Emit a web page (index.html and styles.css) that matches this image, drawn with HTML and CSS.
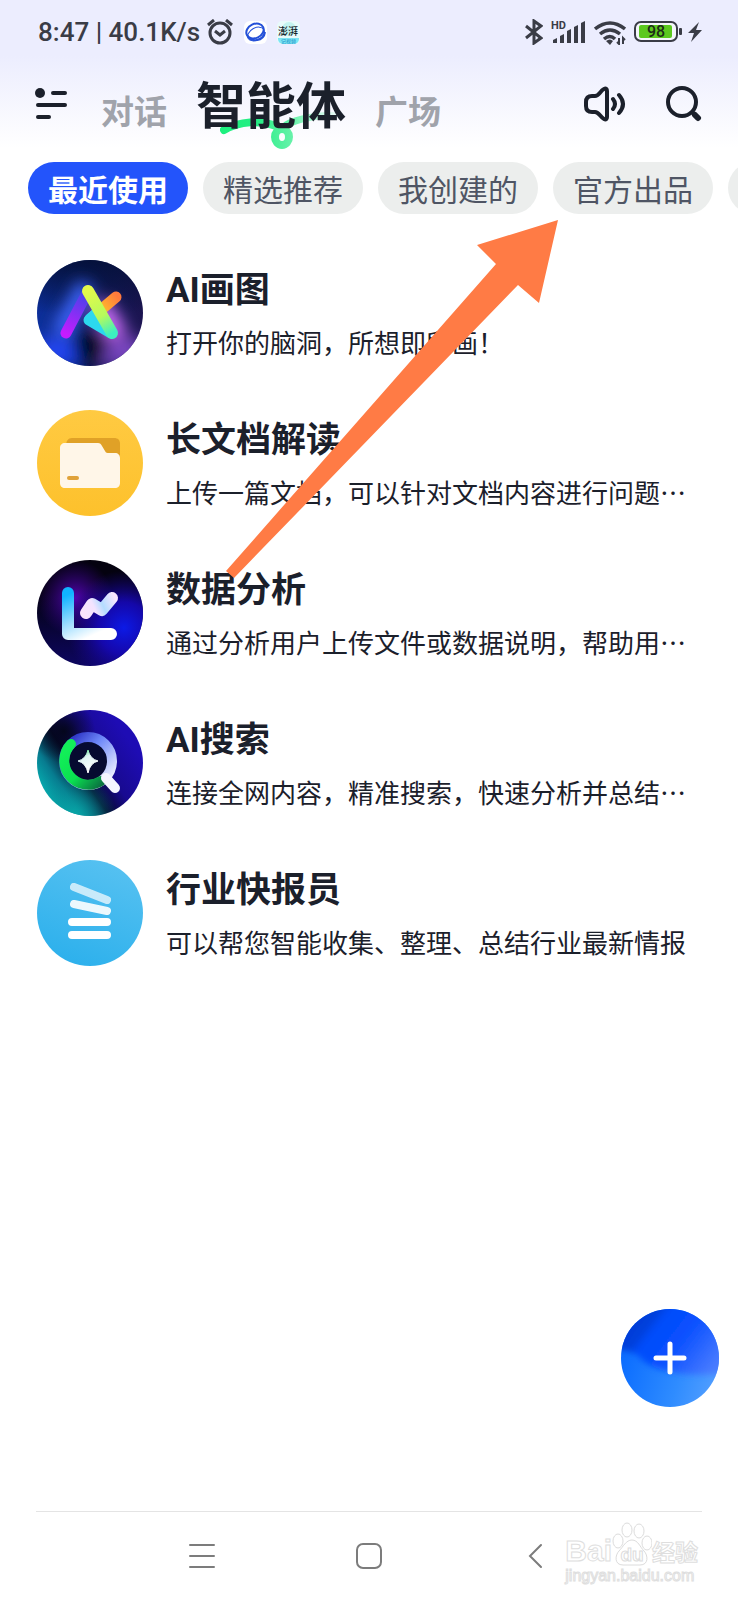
FILE: index.html
```html
<!DOCTYPE html>
<html lang="zh-CN">
<head>
  <meta charset="UTF-8" />
  <meta name="viewport" content="width=device-width, initial-scale=1.0"/>
  <title>智能体</title>
  <link rel="stylesheet" href="styles.css">
</head>
<body>
  <div class="app">
    <div class="statusbar">
      <span class="clock">8:47 | 40.1K/s</span>
      <svg class="alarm" width="28" height="26" viewBox="0 0 28 26" fill="none" stroke="#3a3c46" stroke-width="3">
        <circle cx="14" cy="14" r="10"/>
        <path d="M2 6l6-5M26 6l-6-5M9 12l5 4 5-4"/>
      </svg>
      <svg class="notice" width="23" height="23" viewBox="0 0 23 23">
        <rect width="23" height="23" rx="6" fill="#fff"/>
        <g fill="none" stroke="#2450d8" stroke-width="2">
          <ellipse cx="11" cy="10" rx="9" ry="7" transform="rotate(-25 11 10)"/>
          <ellipse cx="12" cy="13" rx="9" ry="6" transform="rotate(-30 12 13)" stroke-width="1"/>
          <path d="M3 14q3 6 10 5t8-8"/>
        </g>
      </svg>
      <svg class="notice" width="23" height="23" viewBox="0 0 23 23">
        <rect width="23" height="23" rx="5" fill="#e9fbfb"/>
        <path d="M1 17h21v1a5 5 0 0 1-5 5H6a5 5 0 0 1-5-5z" fill="#7de6f5"/>
        <circle cx="12" cy="8" r="7" fill="#c4f4f0"/>
        <text x="1" y="14" font-size="10" font-weight="500" fill="#17262c">澎湃</text>
        <text x="4" y="22" font-size="5" fill="#168fc4">记视频</text>
      </svg>
      <div class="signals">
        <svg width="18" height="26" viewBox="0 0 18 26" fill="none" stroke="#3a3c46" stroke-width="3">
          <path d="M1 7l15 12-7 5V2l7 5L1 19"/>
        </svg>
        <svg class="cell" width="35" height="24" viewBox="0 0 35 24" fill="#3a3c46">
          <text x="0" y="9" font-size="11" font-weight="700">HD</text>
          <path d="M2 20l4-2v5H2zM9 16l4-2v9H9zM16 11l4-2v14h-4zM23 7l4-2v18h-4zM30 3l4-2v22h-4z"/>
        </svg>
        <svg class="wifi" width="32" height="25" viewBox="0 0 32 25" fill="none" stroke="#3a3c46" stroke-width="4">
          <path d="M1 9q15-12 30 0M6 14q10-8 20 0M10 19q6-5 11 0" stroke-width="3.500"/>
          <path d="M12 21q4-3 7 0l-3 4z" fill="#3a3c46" stroke="none"/>
          <path d="M25 18v6l-2-2M29 24v-6l2 2" stroke-width="2"/>
        </svg>
        <svg class="battery" width="48" height="22" viewBox="0 0 48 22">
          <rect x="1" y="1" width="42" height="19" rx="6" fill="#f4f6fb" stroke="#3a3c46" stroke-width="2"/>
          <rect x="5" y="4" width="33" height="13" rx="2" fill="#5cc81e"/>
          <rect x="45" y="7" width="3" height="7" rx="1" fill="#3a3c46"/>
          <text x="22" y="16" font-size="16" font-weight="500" text-anchor="middle" fill="#1c2b17">98</text>
        </svg>
        <svg width="14" height="20" viewBox="0 0 14 20" fill="#3a3c46">
          <path d="M11 0L0 11h6l-3 9L14 8H8z"/>
        </svg>
      </div>
    </div>

    <header class="topbar">
      <button class="icon-btn" aria-label="菜单">
        <svg width="34" height="34" viewBox="0 0 34 34" fill="none" stroke="#1b202b" stroke-width="4" stroke-linecap="round">
          <circle cx="5" cy="6" r="5" fill="#1b202b" stroke="none"/>
          <path d="M18 6h12M3 18h27M3 30h11"/>
        </svg>
      </button>
      <nav class="tabs">
        <button class="tab">对话</button>
        <button class="tab active">
          <svg class="swoosh" width="130" height="38" viewBox="0 0 130 38" fill="none" stroke-linecap="round">
            <defs>
              <linearGradient id="swooshFade" gradientUnits="userSpaceOnUse" x1="0" y1="0" x2="124" y2="0">
                <stop offset="0" stop-color="#1cf07e"/>
                <stop offset=".3" stop-color="#25ee85"/>
                <stop offset=".6" stop-color="#6cf2ac"/>
                <stop offset="1" stop-color="#9af7c8" stop-opacity="0"/>
              </linearGradient>
            </defs>
            <path d="M4 18C20 9 40 8 56 14" stroke="url(#swooshFade)" stroke-width="8"/>
            <ellipse cx="62" cy="25" rx="7" ry="8" stroke="url(#swooshFade)" stroke-width="8"/>
            <path d="M66 13C80 5 100 4 122 2" stroke="url(#swooshFade)" stroke-width="7"/>
          </svg>
          <span>智能体</span>
        </button>
        <button class="tab">广场</button>
      </nav>
      <div class="actions">
        <button class="icon-btn" aria-label="声音">
          <svg width="42" height="36" viewBox="0 0 42 36" fill="none" stroke="#1b202b" stroke-width="4" stroke-linecap="round" stroke-linejoin="round">
            <path d="M8 10h3c4 0 5-5 9-7 2-1 3 0 3 2v26c0 2-1 3-3 2-4-2-5-7-9-7H8c-4 0-6-2-6-6v-4c0-4 2-6 6-6z"/>
            <path d="M29 13q4 5 0 10M35 9q8 9 0 18"/>
          </svg>
        </button>
        <button class="icon-btn" aria-label="搜索">
          <svg width="36" height="36" viewBox="0 0 36 36" fill="none" stroke="#1b202b" stroke-linecap="round">
            <circle cx="16" cy="16" r="14" stroke-width="4"/>
            <path d="M29 29l3 3" stroke-width="6"/>
            <path d="M27 27l2 2" stroke-width="4"/>
          </svg>
        </button>
      </div>
    </header>

    <div class="chips">
      <button class="chip selected">最近使用</button>
      <button class="chip">精选推荐</button>
      <button class="chip">我创建的</button>
      <button class="chip">官方出品</button>
      <button class="chip" aria-label="更多"></button>
    </div>

    <main class="agents">
      <a class="agent" href="#">
        <svg class="avatar" viewBox="0 0 106 106">
          <defs>
            <linearGradient id="drawBase" x1="0" y1="0" x2="1" y2="0"><stop offset="0" stop-color="#0c2f9c"/><stop offset=".45" stop-color="#0a1c5c"/><stop offset="1" stop-color="#1c1450"/></linearGradient>
            <linearGradient id="drawTop" x1="0" y1="0" x2="0" y2="1"><stop offset="0" stop-color="#041038" stop-opacity=".9"/><stop offset=".5" stop-color="#041038" stop-opacity="0"/></linearGradient>
            <filter id="drawGlow" x="-50%" y="-50%" width="200%" height="200%"><feGaussianBlur stdDeviation="8"/></filter>
            <clipPath id="drawClip"><circle cx="53" cy="53" r="53"/></clipPath>
            <linearGradient id="barPurple" gradientUnits="userSpaceOnUse" x1="51" y1="31" x2="29" y2="74"><stop offset="0" stop-color="#3c46e8"/><stop offset="1" stop-color="#c41cff"/></linearGradient>
            <linearGradient id="barYellow" gradientUnits="userSpaceOnUse" x1="51" y1="31" x2="75" y2="73"><stop offset="0" stop-color="#e3f94b"/><stop offset=".6" stop-color="#b6fa5c"/><stop offset="1" stop-color="#3df0c0"/></linearGradient>
            <linearGradient id="barOrange" gradientUnits="userSpaceOnUse" x1="80" y1="36" x2="51" y2="60"><stop offset="0" stop-color="#ff7a3c"/><stop offset=".45" stop-color="#ffb02e"/><stop offset=".6" stop-color="#42dfe0"/><stop offset="1" stop-color="#2cd8ee"/></linearGradient>
          </defs>
          <g clip-path="url(#drawClip)">
            <rect width="106" height="106" fill="url(#drawBase)"/>
            <rect width="106" height="106" fill="url(#drawTop)"/>
            <g filter="url(#drawGlow)">
              <path d="M0 78h34l8 28H0z" fill="#2344f0"/>
              <path d="M106 78H76l-14 28h44z" fill="#7844c0"/>
              <path d="M50 24L22 74" stroke="#3c66ff" stroke-width="18"/>
              <path d="M62 44L82 76" stroke="#d470ff" stroke-width="20"/>
              <path d="M34 74h38l-8 32H42z" fill="#020a20"/>
            </g>
          </g>
          <g fill="none" stroke-width="11" stroke-linecap="round" stroke-linejoin="round">
            <path d="M51 31L29 73" stroke="url(#barPurple)"/>
            <path d="M79 37L53 59" stroke="url(#barOrange)"/>
            <path d="M52 60l22 13-12-22z" stroke="#2cd8ee" fill="#2cd8ee"/>
            <path d="M51 31l24 42" stroke="url(#barYellow)" stroke-width="12"/>
          </g>
        </svg>
        <div class="info">
          <h2>AI画图</h2>
          <p>打开你的脑洞，所想即所画！</p>
        </div>
      </a>
      <a class="agent" href="#">
        <svg class="avatar" viewBox="0 0 106 106">
          <defs>
            <linearGradient id="docBg" x1="0" y1="0" x2="0" y2="1"><stop offset="0" stop-color="#ffca42"/><stop offset="1" stop-color="#fdc12c"/></linearGradient>
          </defs>
          <circle cx="53" cy="53" r="53" fill="url(#docBg)"/>
          <path d="M29 36c0-5 2-8 6-8h42c4 0 6 2 6 6v16H29z" fill="#e0a127"/>
          <path d="M28 33h33c2 0 3 1 4 3l3 5c1 2 2 2 4 2h6c3 0 5 2 5 5v25c0 3-2 5-5 5H28c-3 0-5-2-5-5V38c0-3 2-5 5-5z" fill="#fff6e8"/>
          <path d="M32 68h8" stroke="#e0a23a" stroke-width="4" stroke-linecap="round"/>
        </svg>
        <div class="info">
          <h2>长文档解读</h2>
          <p>上传一篇文档，可以针对文档内容进行问题…</p>
        </div>
      </a>
      <a class="agent" href="#">
        <svg class="avatar" viewBox="0 0 106 106">
          <defs>
            <radialGradient id="dataPurple" cx=".36" cy=".36" r=".36"><stop offset="0" stop-color="#5204ae"/><stop offset="1" stop-color="#3a0494" stop-opacity="0"/></radialGradient>
            <radialGradient id="dataBlue" cx=".82" cy=".64" r=".54"><stop offset="0" stop-color="#0c1ae6"/><stop offset=".45" stop-color="#1608b8" stop-opacity=".9"/><stop offset="1" stop-color="#1a0490" stop-opacity="0"/></radialGradient>
            <linearGradient id="dataBase" x1="0" y1="0" x2="0" y2="1"><stop offset=".3" stop-color="#04020f"/><stop offset="1" stop-color="#0d0660"/></linearGradient>
            <linearGradient id="axis" gradientUnits="userSpaceOnUse" x1="30" y1="35" x2="50" y2="78"><stop offset="0" stop-color="#10b4ff"/><stop offset=".55" stop-color="#9adcff"/><stop offset="1" stop-color="#fff"/></linearGradient>
            <linearGradient id="trend" gradientUnits="userSpaceOnUse" x1="46" y1="53" x2="78" y2="38"><stop offset="0" stop-color="#fbe3fb"/><stop offset=".35" stop-color="#f3e4ff"/><stop offset=".6" stop-color="#b4dcff"/><stop offset="1" stop-color="#f7e6ff"/></linearGradient>
          </defs>
          <circle cx="53" cy="53" r="53" fill="url(#dataBase)"/>
          <circle cx="53" cy="53" r="53" fill="url(#dataPurple)"/>
          <circle cx="53" cy="53" r="53" fill="url(#dataBlue)"/>
          <g fill="none" stroke-linecap="round" stroke-linejoin="round">
            <path d="M31 33v41h43" stroke="url(#axis)" stroke-width="12"/>
            <path d="M49 53l6-9 10 6 10-12" stroke="url(#trend)" stroke-width="12"/>
          </g>
        </svg>
        <div class="info">
          <h2>数据分析</h2>
          <p>通过分析用户上传文件或数据说明，帮助用…</p>
        </div>
      </a>
      <a class="agent" href="#">
        <svg class="avatar" viewBox="0 0 106 106">
          <defs>
            <linearGradient id="searchBase" x1=".05" y1=".8" x2=".85" y2=".25"><stop offset="0" stop-color="#06b4b4"/><stop offset=".2" stop-color="#077c90"/><stop offset=".42" stop-color="#050828"/><stop offset=".65" stop-color="#180a90"/><stop offset="1" stop-color="#1e0cb4"/></linearGradient>
            <radialGradient id="searchDark" cx=".25" cy=".2" r=".3"><stop offset="0" stop-color="#04061c"/><stop offset="1" stop-color="#04061c" stop-opacity="0"/></radialGradient>
            <radialGradient id="searchTeal" cx=".35" cy="1" r=".4"><stop offset="0" stop-color="#08a8a8"/><stop offset="1" stop-color="#078c94" stop-opacity="0"/></radialGradient>
            <linearGradient id="ring" x1="0" y1="0" x2="1" y2="1"><stop offset=".1" stop-color="#3038c8"/><stop offset=".4" stop-color="#6c86f8"/><stop offset=".9" stop-color="#e8ecff"/></linearGradient>
            <linearGradient id="ringGreen" gradientUnits="userSpaceOnUse" x1="30" y1="40" x2="66" y2="76"><stop offset="0" stop-color="#12ee58"/><stop offset=".5" stop-color="#0ae050"/><stop offset="1" stop-color="#0a6a40"/></linearGradient>
            <linearGradient id="spark" x1="0" y1="0" x2=".4" y2="1"><stop offset="0" stop-color="#3ae878"/><stop offset=".4" stop-color="#dff4f4"/><stop offset="1" stop-color="#fff"/></linearGradient>
          </defs>
          <circle cx="53" cy="53" r="53" fill="url(#searchBase)"/>
          <circle cx="53" cy="53" r="53" fill="url(#searchDark)"/>
          <circle cx="53" cy="53" r="53" fill="url(#searchTeal)"/>
          <circle cx="51" cy="51" r="20" fill="#060a30"/>
          <circle cx="51" cy="51" r="24" fill="none" stroke="url(#ring)" stroke-width="10"/>
          <path d="M34 34a24 24 0 0 0 30 37" fill="none" stroke="url(#ringGreen)" stroke-width="10" stroke-linecap="round"/>
          <path d="M69 68l9 10" stroke="#f4f5ff" stroke-width="10" stroke-linecap="round"/>
          <path d="M51 40q2 9 10 11-8 2-10 12-2-10-10-12 8-2 10-11z" fill="url(#spark)" stroke="url(#spark)" stroke-linejoin="round"/>
        </svg>
        <div class="info">
          <h2>AI搜索</h2>
          <p>连接全网内容，精准搜索，快速分析并总结…</p>
        </div>
      </a>
      <a class="agent" href="#">
        <svg class="avatar" viewBox="0 0 106 106">
          <defs>
            <linearGradient id="newsBg" x1=".7" y1="0" x2=".3" y2="1"><stop offset="0" stop-color="#56c1f1"/><stop offset="1" stop-color="#2cb0ec"/></linearGradient>
          </defs>
          <circle cx="53" cy="53" r="53" fill="url(#newsBg)"/>
          <g stroke="#fff" stroke-width="8" stroke-linecap="round">
            <path d="M37 27l33 13" opacity=".7"/>
            <path d="M37 44l33 7" opacity=".9"/>
            <path d="M35 62h35M35 75h35"/>
          </g>
        </svg>
        <div class="info">
          <h2>行业快报员</h2>
          <p>可以帮您智能收集、整理、总结行业最新情报</p>
        </div>
      </a>
    </main>

    <footer class="navbar">
      <button class="nav-btn" aria-label="最近任务">
        <svg width="28" height="28" viewBox="0 0 28 28" fill="none" stroke="#7c7c7c" stroke-width="2" stroke-linecap="round"><path d="M2 3h24M2 14h24M2 25h24"/></svg>
      </button>
      <button class="nav-btn" aria-label="主页">
        <svg width="28" height="28" viewBox="0 0 28 28" fill="none" stroke="#7c7c7c" stroke-width="2"><rect x="2" y="2" width="24" height="24" rx="6"/></svg>
      </button>
      <button class="nav-btn" aria-label="返回">
        <svg width="28" height="28" viewBox="0 0 28 28" fill="none" stroke="#7c7c7c" stroke-width="2" stroke-linecap="round"><path d="M19 3L8 14l11 11"/></svg>
      </button>
    </footer>

    <button class="fab" aria-label="新建">
      <svg width="98" height="98" viewBox="0 0 98 98">
        <defs>
          <linearGradient id="fabBase" x1="0" y1=".5" x2="1" y2=".8"><stop offset="0" stop-color="#0a6cff"/><stop offset=".6" stop-color="#2f8cff"/><stop offset="1" stop-color="#55a0ff"/></linearGradient>
          <linearGradient id="fabTop" x1="0" y1=".2" x2="1" y2=".7"><stop offset="0" stop-color="#0638d0"/><stop offset=".3" stop-color="#0040dc"/><stop offset=".36" stop-color="#004cfa"/><stop offset=".6" stop-color="#0a50ff"/><stop offset="1" stop-color="#4a7cff"/></linearGradient>
          <clipPath id="fabClip"><circle cx="49" cy="49" r="49"/></clipPath>
          <filter id="fabSoft"><feGaussianBlur stdDeviation="3"/></filter>
        </defs>
        <g clip-path="url(#fabClip)">
          <rect width="98" height="98" fill="url(#fabBase)"/>
          <path d="M-8-8h114v72q-36 4-60-2T18 47Q6 40-8 40z" fill="url(#fabTop)" filter="url(#fabSoft)"/>
        </g>
        <path d="M35 49h28M49 35v28" stroke="#fff" stroke-width="5" stroke-linecap="round"/>
      </svg>
    </button>

    <svg class="pointer" width="332" height="360" viewBox="0 0 332 360">
      <path d="M332 0l-19 83-21-18L8 358l-8-7L270 44l-19-19z" fill="#ff7b45"/>
    </svg>

    <div class="watermark">
      <div class="brand">
        <span class="latin">Bai</span>
        <svg width="40" height="44" viewBox="0 0 40 44" fill="#fff" stroke="#dcdcdc">
          <ellipse cx="6" cy="19" rx="5" ry="7"/>
          <ellipse cx="15" cy="8" rx="5" ry="7"/>
          <ellipse cx="27" cy="9" rx="5" ry="7"/>
          <ellipse cx="35" cy="21" rx="5" ry="7"/>
          <path d="M20 18c6 0 8 7 12 11s5 14-4 14H11c-9 0-8-10-4-14s7-11 13-11z"/>
          <text class="du" x="20" y="39" font-size="19" text-anchor="middle">du</text>
        </svg>
        <span class="han">经验</span>
      </div>
      <div class="site">jingyan.baidu.com</div>
    </div>
  </div>
</body>
</html>
```
FILE: styles.css
```css
* {
  box-sizing: border-box;
}
body {
  margin: 0;
  font-family: "Noto Sans CJK SC", "Noto Sans", sans-serif;
  color: #1b202b;
  background: #fff;
}
button {
  padding: 0;
  border: none;
  background: none;
  font-family: inherit;
  color: inherit;
  cursor: pointer;
}
svg {
  display: block;
  flex-shrink: 0;
}
.app {
  position: relative;
  display: flex;
  flex-direction: column;
  min-height: 100vh;
  overflow: hidden;
  background: linear-gradient(#ecedfe 0, #ecedfe 56px, #fff 148px);
}

/* status bar */
.statusbar {
  display: flex;
  align-items: center;
  height: 64px;
  padding: 0 36px 0 38px;
  color: #3a3c46;
}
.clock {
  font-family: Roboto, sans-serif;
  font-size: 26px;
  font-weight: 500;
  white-space: nowrap;
}
.alarm {
  margin-left: 6px;
}
.notice {
  margin-left: 10px;
}
.signals {
  display: flex;
  align-items: center;
  margin-left: auto;
}
.cell,
.wifi {
  margin-right: 8px;
}
.battery {
  margin-right: 6px;
}
.cell {
  margin-left: 8px;
}
.cell text,
.battery text {
  font-family: Roboto, sans-serif;
}

/* top tabs */
.topbar {
  display: flex;
  align-items: center;
  height: 80px;
  padding: 0 36px 0 35px;
}
.tabs {
  display: flex;
  align-items: baseline;
  gap: 29px;
  margin-left: 32px;
  padding-top: 4px;
}
.tab {
  position: relative;
  font-size: 33px;
  font-weight: 700;
  line-height: 72px;
  color: #a0a3ab;
}
.tab.active {
  font-size: 50px;
  color: #1b202b;
}
.tab.active span {
  position: relative;
}
.swoosh {
  position: absolute;
  left: 24px;
  bottom: -12px;
}
.actions {
  display: flex;
  gap: 40px;
  margin-left: auto;
}

/* filter chips */
.chips {
  display: flex;
  gap: 15px;
  padding: 18px 0 0 28px;
  overflow: hidden;
}
.chip {
  flex: 0 0 160px;
  height: 52px;
  border-radius: 26px;
  background: #eceeed;
  color: #4f5564;
  font-size: 30px;
  line-height: 52px;
}
.chip.selected {
  background: #2354fb;
  color: #fff;
  font-weight: 700;
}

/* agent list */
.agents {
  display: flex;
  flex: 1;
  flex-direction: column;
  gap: 44px;
  padding: 46px 37px 0;
}
.agent {
  display: flex;
  align-items: center;
  gap: 23px;
  color: inherit;
  text-decoration: none;
}
.avatar {
  width: 106px;
  height: 106px;
}
.info {
  flex: 1;
  min-width: 0;
}
.info h2 {
  margin: 0;
  font-family: Roboto, "Noto Sans CJK SC", sans-serif;
  font-size: 35px;
  font-weight: 700;
  line-height: 52px;
}
.info p {
  margin: 6px 0 0;
  font-size: 26px;
  line-height: 38px;
  white-space: nowrap;
}

/* system navigation */
.navbar {
  display: flex;
  justify-content: center;
  gap: 139px;
  margin: 0 36px;
  padding: 30px 0;
  border-top: 1px solid #e4e4e4;
}

/* items over the page */
.fab {
  position: absolute;
  right: 19px;
  bottom: 193px;
  border-radius: 50%;
}
.pointer {
  position: absolute;
  top: 220px;
  left: 226px;
  pointer-events: none;
}
.watermark {
  position: absolute;
  right: 40px;
  bottom: 14px;
  color: #fff;
  -webkit-text-stroke: 1px #dedede;
}
.brand {
  display: flex;
  align-items: flex-end;
}
.latin {
  font-family: "Liberation Sans", sans-serif;
  font-size: 30px;
  font-weight: 700;
  line-height: 30px;
}
.du {
  font-family: "Liberation Sans", sans-serif;
  font-weight: 700;
}
.han {
  font-size: 23px;
  font-weight: 700;
  line-height: 30px;
}
.site {
  font-family: "Liberation Sans", sans-serif;
  font-size: 16px;
  line-height: 20px;
}
```
